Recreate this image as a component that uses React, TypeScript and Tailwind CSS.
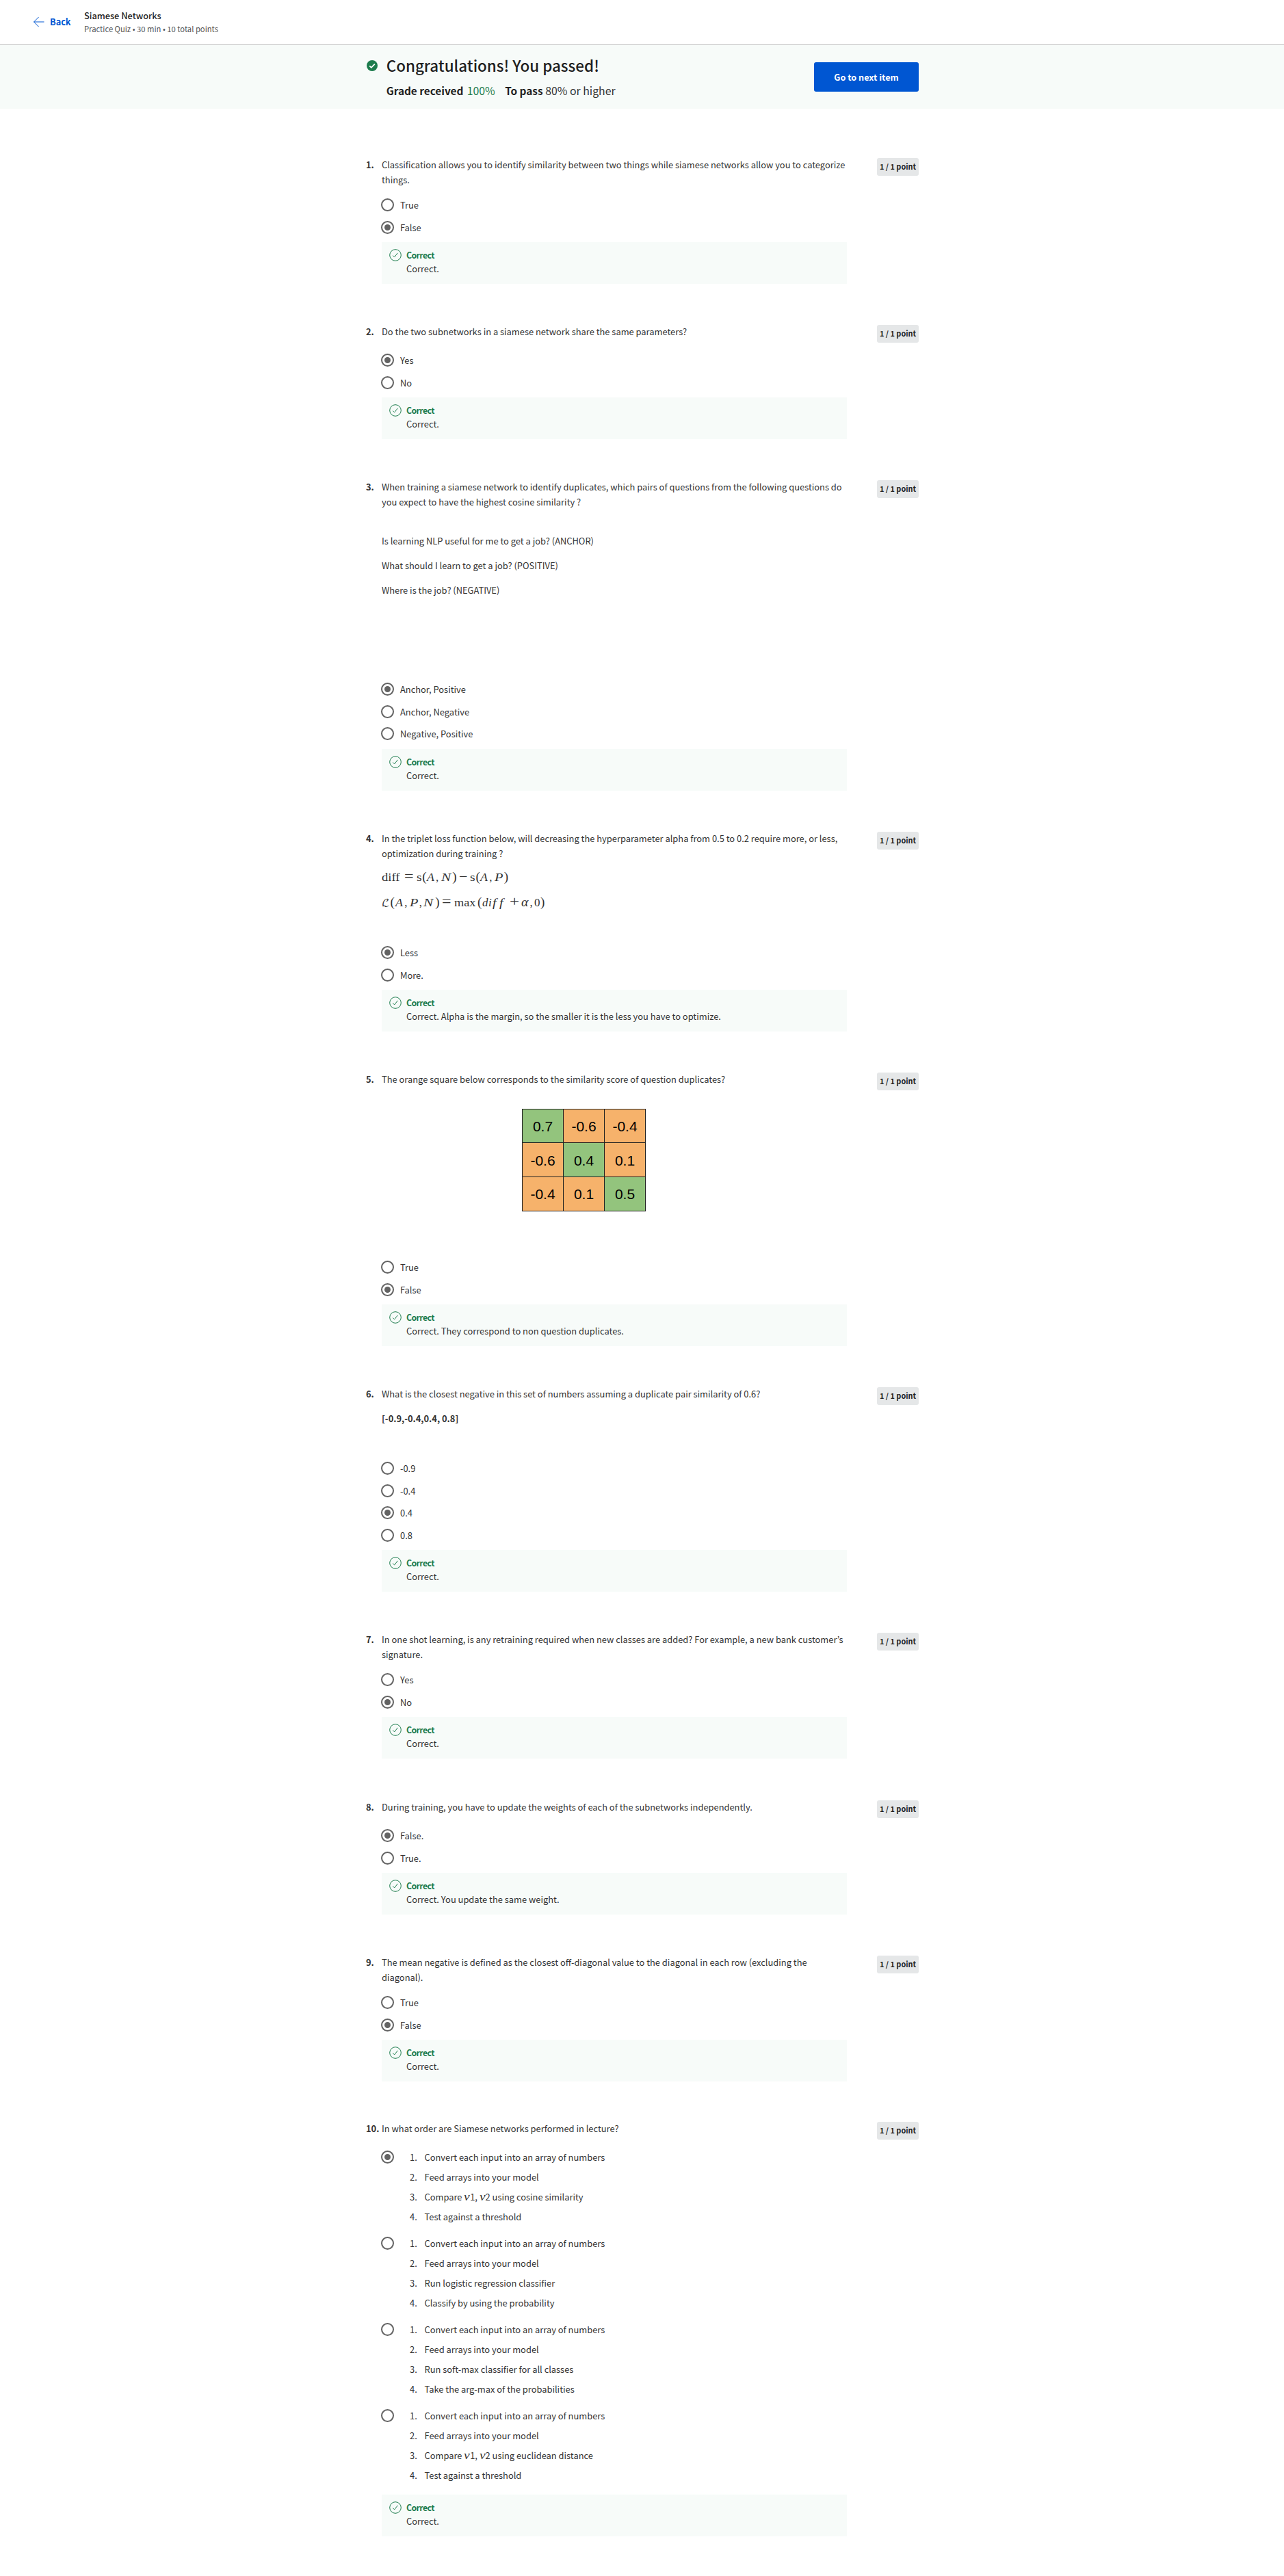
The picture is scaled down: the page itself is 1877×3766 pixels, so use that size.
import type { ReactNode } from "react";

type Option = { label: ReactNode; checked?: boolean };

type Question = {
  prompt: ReactNode;
  options: Option[];
  feedback: string;
  size: string;
  promptSize: string;
};

function Tok({ className, children }: { className: string; children: ReactNode }) {
  return <span className={`inline-block origin-left whitespace-pre ${className}`}>{children}</span>;
}

function DiffFormula() {
  return (
    <div className="mt-[12px] flex h-[22px] items-baseline font-['Liberation_Serif',serif] text-[17px] leading-[22px] text-[#333]">
      <Tok className="w-[33px] scale-x-109">diff</Tok>
      <Tok className="w-[18px] scale-x-120 text-[20px]">=</Tok>
      <Tok className="w-[8.3px] scale-x-115">s</Tok>
      <Tok className="w-[6.3px] text-[19px]">(</Tok>
      <Tok className="w-[13.3px] scale-x-105 italic">A</Tok>
      <Tok className="w-[7.7px]">,</Tok>
      <Tok className="w-[16.7px] scale-x-125 italic">N</Tok>
      <Tok className="w-[10px] text-[19px]">)</Tok>
      <Tok className="w-[16px] scale-x-110 text-[20px]">−</Tok>
      <Tok className="w-[8.3px] scale-x-115">s</Tok>
      <Tok className="w-[6.3px] text-[19px]">(</Tok>
      <Tok className="w-[13.3px] scale-x-105 italic">A</Tok>
      <Tok className="w-[7.5px]">,</Tok>
      <Tok className="w-[14px] scale-x-120 italic">P</Tok>
      <Tok className="w-[8px] text-[19px]">)</Tok>
    </div>
  );
}

function LossFormula() {
  return (
    <div className="mt-[14.5px] flex h-[22px] items-baseline font-['Liberation_Serif',serif] text-[17px] leading-[22px] text-[#333]">
      <Tok className="w-[12.5px] font-['DejaVu_Math_TeX_Gyre',serif] text-[15px] leading-[22px]">ℒ</Tok>
      <Tok className="w-[7px] text-[19px]">(</Tok>
      <Tok className="w-[13.7px] scale-x-105 italic">A</Tok>
      <Tok className="w-[7.5px]">,</Tok>
      <Tok className="w-[14px] scale-x-120 italic">P</Tok>
      <Tok className="w-[6.5px]">,</Tok>
      <Tok className="w-[17px] scale-x-125 italic">N</Tok>
      <Tok className="w-[10px] text-[19px]">)</Tok>
      <Tok className="w-[18.3px] scale-x-120 text-[20px]">=</Tok>
      <Tok className="w-[33.5px] scale-x-107">max</Tok>
      <Tok className="w-[7px] text-[19px]">(</Tok>
      <Tok className="w-[9px] italic">d</Tok>
      <Tok className="w-[6px] italic">i</Tok>
      <Tok className="w-[10px] scale-x-120 italic">f</Tok>
      <Tok className="w-[15.5px] scale-x-120 italic">f</Tok>
      <Tok className="w-[17px] scale-x-125 text-[20px]">+</Tok>
      <Tok className="w-[12px] scale-x-110 text-[18px] italic">α</Tok>
      <Tok className="w-[6.5px]">,</Tok>
      <Tok className="w-[9px]">0</Tok>
      <Tok className="w-[6px] text-[19px]">)</Tok>
    </div>
  );
}

const matrix = [
  ["0.7", "-0.6", "-0.4"],
  ["-0.6", "0.4", "0.1"],
  ["-0.4", "0.1", "0.5"],
];

function SimilarityMatrix() {
  return (
    <div className="mt-[32px] ml-[205px] grid h-[150px] w-[181px] grid-cols-3 grid-rows-3 gap-px border border-[#222] bg-[#222] font-['Liberation_Sans',sans-serif] text-[21px] text-black">
      {matrix.map((row, r) =>
        row.map((value, c) => (
          <div
            key={`${r}-${c}`}
            className={`flex items-center justify-center pt-[2px] ${r === c ? "bg-[#93c47d]" : "bg-[#f6b26b]"}`}
          >
            {value}
          </div>
        )),
      )}
    </div>
  );
}

function Steps({ items }: { items: ReactNode[] }) {
  return (
    <ol className="ml-[14px] flex flex-col pb-[4px]">
      {items.map((item, i) => (
        <li key={i} className="flex h-[29px] items-start">
          <span className="w-[21.5px]">{i + 1}.</span>
          <span>{item}</span>
        </li>
      ))}
    </ol>
  );
}

function V({ n }: { n: number }) {
  return (
    <>
      <i className="inline-block w-[8.8px] origin-left scale-x-115 font-['Liberation_Serif',serif] text-[17px] leading-none">
        v
      </i>
      {n}
    </>
  );
}

function Radio({ checked }: { checked?: boolean }) {
  return (
    <span className="-ml-px flex size-[19px] shrink-0 items-center justify-center rounded-full border-2 border-[#636363]">
      {checked && <span className="size-[9px] rounded-full bg-[#636363]" />}
    </span>
  );
}

function Feedback({ text }: { text: string }) {
  return (
    <div className="mt-[6px] flex h-[61px] bg-[#f7fbf9] pt-[10px] pl-[11px]">
      <svg viewBox="0 0 18 18" className="size-[18px] shrink-0" fill="none" stroke="#1d7c4d">
        <circle cx="9" cy="9" r="8.3" strokeWidth="1" />
        <path d="M5.3 9.6l2.3 2.3 4.7-6" strokeWidth="1" />
      </svg>
      <div className="ml-[7px]">
        <div className="h-[19px] text-[12.3px] leading-[19px] font-bold tracking-[-0.6px] text-[#1d7c4d]">Correct</div>
        <div className="leading-[19px]">{text}</div>
      </div>
    </div>
  );
}

const convert = "Convert each input into an array of numbers";
const feed = "Feed arrays into your model";

const questions: Question[] = [
  {
    prompt:
      "Classification allows you to identify similarity between two things while siamese networks allow you to categorize things.",
    options: [{ label: "True" }, { label: "False", checked: true }],
    feedback: "Correct.",
    size: "h-[244px]",
    promptSize: "h-[53px]",
  },
  {
    prompt: "Do the two subnetworks in a siamese network share the same parameters?",
    options: [{ label: "Yes", checked: true }, { label: "No" }],
    feedback: "Correct.",
    size: "h-[227px]",
    promptSize: "h-[36px]",
  },
  {
    prompt: (
      <>
        <p>
          When training a siamese network to identify duplicates, which pairs of questions from the following questions
          do you expect to have the highest cosine similarity ?
        </p>
        <p className="mt-[36px]">Is learning NLP useful for me to get a job? (ANCHOR)</p>
        <p className="mt-[14.5px]">What should I learn to get a job? (POSITIVE)</p>
        <p className="mt-[14.5px]">Where is the job? (NEGATIVE)</p>
      </>
    ),
    options: [
      { label: "Anchor, Positive", checked: true },
      { label: "Anchor, Negative" },
      { label: "Negative, Positive" },
    ],
    feedback: "Correct.",
    size: "h-[514px]",
    promptSize: "h-[290px]",
  },
  {
    prompt: (
      <>
        <p>
          In the triplet loss function below, will decreasing the hyperparameter alpha from 0.5 to 0.2 require more, or
          less, optimization during training ?
        </p>
        <DiffFormula />
        <LossFormula />
      </>
    ),
    options: [{ label: "Less", checked: true }, { label: "More." }],
    feedback: "Correct. Alpha is the margin, so the smaller it is the less you have to optimize.",
    size: "h-[352px]",
    promptSize: "h-[161px]",
  },
  {
    prompt: (
      <>
        <p>The orange square below corresponds to the similarity score of question duplicates?</p>
        <SimilarityMatrix />
      </>
    ),
    options: [{ label: "True" }, { label: "False", checked: true }],
    feedback: "Correct. They correspond to non question duplicates.",
    size: "h-[460px]",
    promptSize: "h-[269px]",
  },
  {
    prompt: (
      <>
        <p>What is the closest negative in this set of numbers assuming a duplicate pair similarity of 0.6?</p>
        <p className="mt-[14.5px] font-bold">[-0.9,-0.4,0.4, 0.8]</p>
      </>
    ),
    options: [{ label: "-0.9" }, { label: "-0.4" }, { label: "0.4", checked: true }, { label: "0.8" }],
    feedback: "Correct.",
    size: "h-[359px]",
    promptSize: "h-[103px]",
  },
  {
    prompt:
      "In one shot learning, is any retraining required when new classes are added? For example, a new bank customer’s signature.",
    options: [{ label: "Yes" }, { label: "No", checked: true }],
    feedback: "Correct.",
    size: "h-[245px]",
    promptSize: "h-[53px]",
  },
  {
    prompt: "During training, you have to update the weights of each of the subnetworks independently.",
    options: [{ label: "False.", checked: true }, { label: "True." }],
    feedback: "Correct. You update the same weight.",
    size: "h-[227px]",
    promptSize: "h-[36px]",
  },
  {
    prompt:
      "The mean negative is defined as the closest off-diagonal value to the diagonal in each row (excluding the diagonal).",
    options: [{ label: "True" }, { label: "False", checked: true }],
    feedback: "Correct.",
    size: "h-[243px]",
    promptSize: "h-[53px]",
  },
  {
    prompt: "In what order are Siamese networks performed in lecture?",
    options: [
      {
        checked: true,
        label: (
          <Steps
            items={[convert, feed, <>Compare <V n={1} />, <V n={2} /> using cosine similarity</>, "Test against a threshold"]}
          />
        ),
      },
      { label: <Steps items={[convert, feed, "Run logistic regression classifier", "Classify by using the probability"]} /> },
      { label: <Steps items={[convert, feed, "Run soft-max classifier for all classes", "Take the arg-max of the probabilities"]} /> },
      {
        label: (
          <Steps
            items={[convert, feed, <>Compare <V n={1} />, <V n={2} /> using euclidean distance</>, "Test against a threshold"]}
          />
        ),
      },
    ],
    feedback: "Correct.",
    size: "h-[664px]",
    promptSize: "h-[36px]",
  },
];

function QuestionBlock({ question, index }: { question: Question; index: number }) {
  return (
    <section className={`flex items-start ${question.size}`}>
      <div className="-mt-px w-[23px] shrink-0 font-bold whitespace-nowrap">{index + 1}.</div>
      <div className="w-[680px]">
        <div className={question.promptSize}>
          <div className="-mt-px">{question.prompt}</div>
        </div>
        {question.options.map((option, i) => (
          <div key={i} className="flex min-h-[32.5px] items-start pt-[7px]">
            <Radio checked={option.checked} />
            <div className="-mt-px ml-[9px]">{option.label}</div>
          </div>
        ))}
        <Feedback text={question.feedback} />
      </div>
      <div className="-mr-px ml-auto flex h-[26px] w-[61px] items-center justify-center rounded-[3px] bg-[#e5e7e8] text-[10.9px] font-bold text-[#1f1f1f]">
        1 / 1 point
      </div>
    </section>
  );
}

export default function App() {
  return (
    <div className="h-[3766px] w-full overflow-hidden bg-white font-['Noto_Sans_CJK_JP',sans-serif] text-[12.88px] leading-[21.5px] text-[#333]">
      <header className="flex h-[66px] border-b border-[#bdbdbd] bg-white">
        <div className="ml-[48px] flex h-[64px] w-[75px] items-center gap-[8px] text-[12.7px] font-bold text-[#0056d2]">
          <svg viewBox="0 0 17 16" className="h-[16px] w-[17px]" fill="none" stroke="#0056d2" strokeWidth="1">
            <path d="M8.5 1L1.5 8l7 7M1.5 8h15" />
          </svg>
          Back
        </div>
        <div className="pt-[13px]">
          <div className="text-[12.75px] leading-[20px] font-medium text-[#1f1f1f]">Siamese Networks</div>
          <div className="text-[11.24px] leading-[18px] text-[#555]">Practice Quiz • 30 min • 10 total points</div>
        </div>
      </header>

      <div className="h-[93px] bg-[#f7fbf9]">
        <div className="mx-auto flex h-full w-[807px] items-start">
          <svg viewBox="0 0 16 16" className="mt-[22px] ml-px size-[16px]">
            <circle cx="8" cy="8" r="8" fill="#1d7c4d" />
            <path d="M4.2 8.3l2.6 2.5 5-5.2" fill="none" stroke="#fff" strokeWidth="1.8" />
          </svg>
          <div className="ml-[12.7px] pt-[13px]">
            <h1 className="text-[22.4px] leading-[32px] font-medium text-[#1f1f1f]">Congratulations! You passed!</h1>
            <div className="mt-[9px] flex items-baseline text-[15.85px] leading-[24px]">
              <span className="w-[118px] text-[15.35px] font-bold text-[#1f1f1f]">Grade received</span>
              <span className="w-[55.5px] text-[#1d7c4d]">100%</span>
              <span className="w-[59px] text-[15.35px] font-bold text-[#1f1f1f]">To pass</span>
              <span>80% or higher</span>
            </div>
          </div>
          <button className="mt-[25px] -mr-px ml-auto h-[43px] w-[153px] rounded-[3px] bg-[#0056d2] text-[12.65px] font-bold text-white">
            Go to next item
          </button>
        </div>
      </div>

      <main className="mx-auto mt-[72px] w-[807px]">
        {questions.map((question, i) => (
          <QuestionBlock key={i} question={question} index={i} />
        ))}
      </main>
    </div>
  );
}
